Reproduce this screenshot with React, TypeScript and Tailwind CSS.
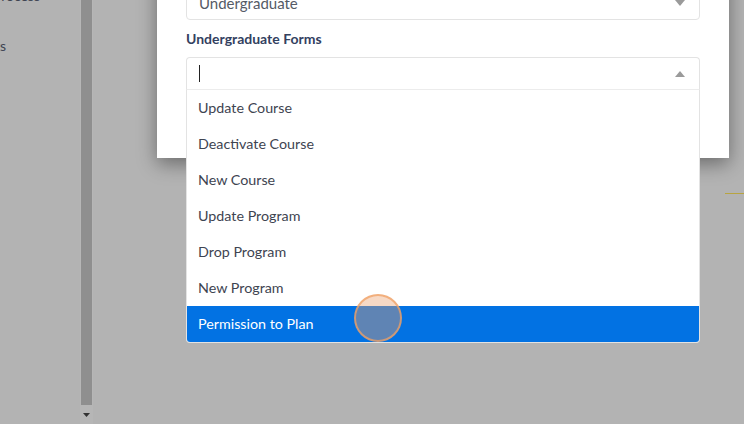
const forms = [
  'Update Course',
  'Deactivate Course',
  'New Course',
  'Update Program',
  'Drop Program',
  'New Program',
  'Permission to Plan',
];

function Caret({ up }: { up?: boolean }) {
  return (
    <svg width="10" height="6" viewBox="0 0 10 6" className="text-[#9a9a9a]">
      {up ? <path d="M0 6 L5 0 L10 6 Z" fill="currentColor" /> : <path d="M0 0 L5 6 L10 0 Z" fill="currentColor" />}
    </svg>
  );
}

export default function App() {
  return (
    <div className="relative flex h-[424px] w-[744px] overflow-hidden bg-[#b3b3b3] font-['Lato',sans-serif]">
      {/* sidebar behind the overlay */}
      <div className="flex w-[80px] flex-col gap-[29px] overflow-hidden text-[14px] text-[#3e4451]">
        <div className="-mt-[15px] flex w-[40px] justify-end">
          <span className="whitespace-nowrap">Process</span>
        </div>
        <div className="flex w-[6px] justify-end">
          <span className="whitespace-nowrap">Statements</span>
        </div>
      </div>

      {/* scrollbar */}
      <div className="flex w-[13px] flex-col bg-[#b6b6b6]">
        <div className="mx-[1px] h-[405px] bg-[#8f8f8f]" />
        <div className="flex flex-1 items-center justify-center">
          <svg width="7" height="4" viewBox="0 0 7 4">
            <path d="M0 0 L3.5 4 L7 0 Z" fill="#333" />
          </svg>
        </div>
      </div>

      <div className="flex-1" />

      {/* page line under overlay */}
      <div className="absolute left-[725px] top-[193px] h-[1px] w-[19px] bg-[#b8a440]" />

      {/* modal */}
      <div className="absolute left-[157px] top-[-60px] h-[218px] w-[572px] bg-white shadow-[0_6px_18px_rgba(0,0,0,0.4)]">
        <div className="flex flex-col px-[29px] pt-[46px]">
          <div className="flex h-[34px] items-center justify-between rounded-[4px] border border-[#e3e3e3] pl-[12px] pr-[14px] text-[15px] text-[#555b66]">
            <span>Undergraduate</span>
            <Caret />
          </div>
          <div className="mt-[10px] text-[14px] font-bold leading-[17px] text-[#33415f]">
            Undergraduate Forms
          </div>
        </div>
      </div>

      {/* open select with dropdown */}
      <div className="absolute left-[186px] top-[57px] w-[514px]">
        <div className="flex h-[32px] items-center justify-between rounded-t-[4px] border border-b-0 border-[#e3e3e3] bg-white pl-[12px] pr-[14px]">
          <div className="h-[17px] w-[1px] bg-[#222]" />
          <Caret up />
        </div>
        <div className="overflow-hidden rounded-b-[4px] border border-[#e3e3e3] border-t-[#ececec] bg-white">
          {forms.map((f) => {
            const active = f === 'Permission to Plan';
            return (
              <div
                key={f}
                className={
                  active
                    ? 'flex h-[36px] items-center bg-[#0272e3] pl-[11px] text-[14.3px] text-white'
                    : 'flex h-[36px] items-center pl-[11px] text-[14.3px] text-[#3e4451]'
                }
              >
                {f}
              </div>
            );
          })}
        </div>
      </div>

      {/* click indicator */}
      <div className="absolute left-[354px] top-[294px] h-[48px] w-[48px] rounded-full border-2 border-[rgba(240,160,100,0.75)] bg-[rgba(235,160,110,0.4)]" />
    </div>
  );
}
